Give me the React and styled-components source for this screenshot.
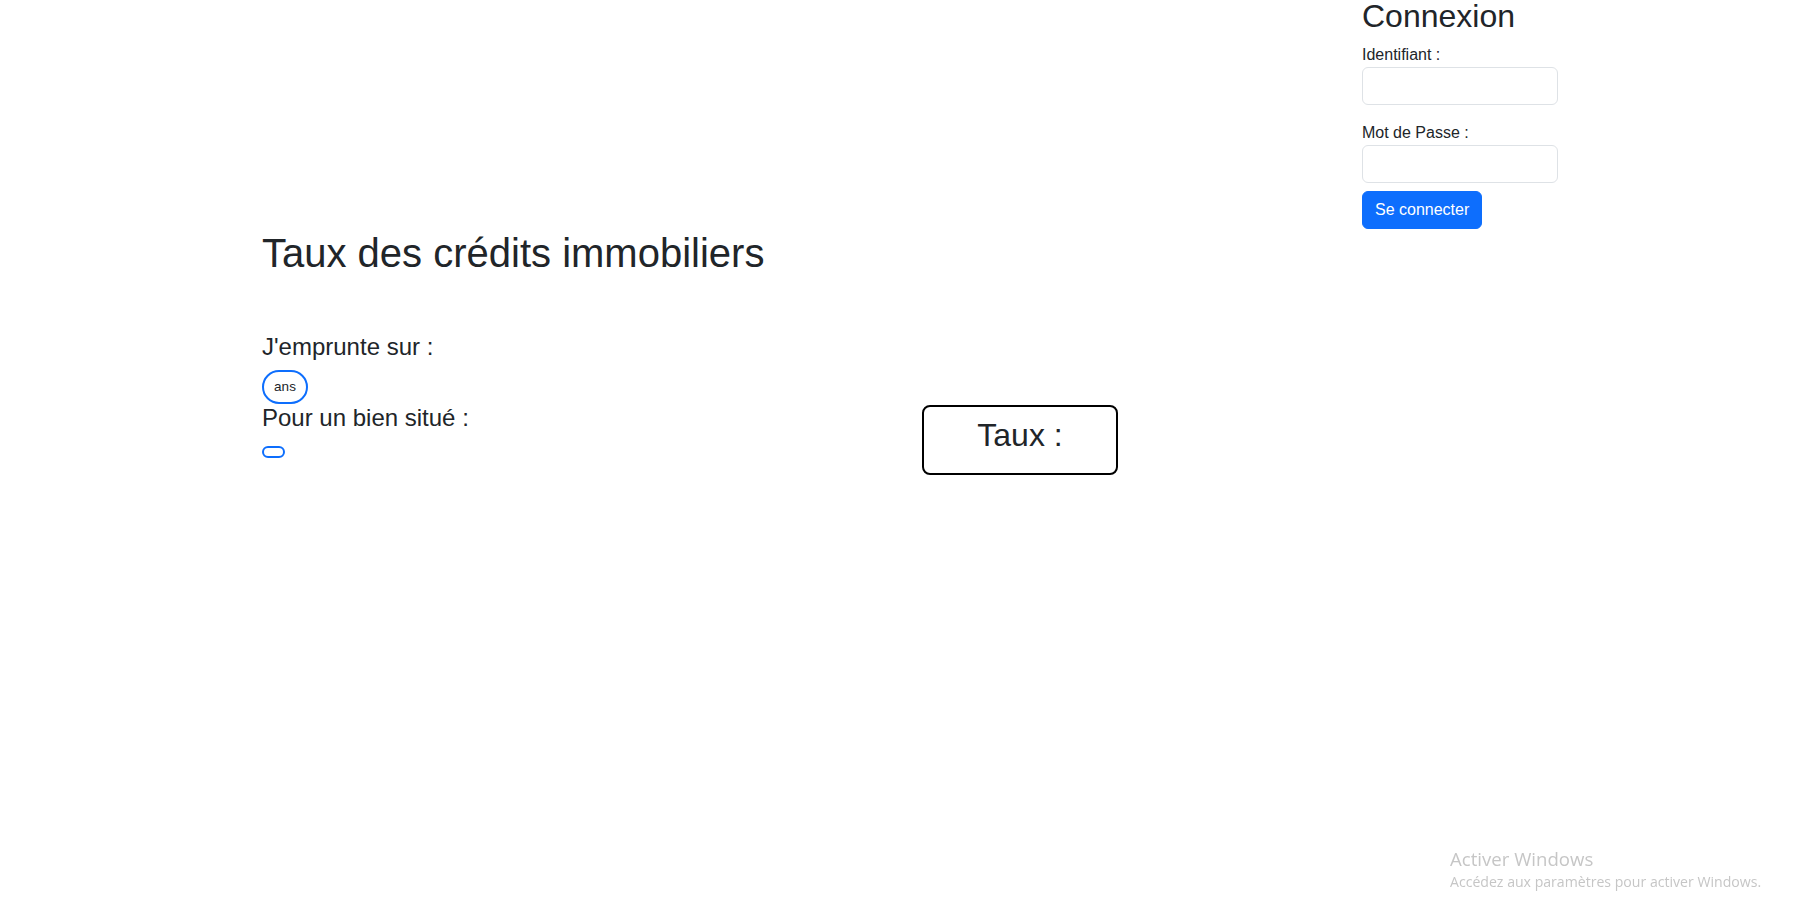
import React from "react";
import styled, { createGlobalStyle } from "styled-components";

const GlobalStyle = createGlobalStyle`
  html, body {
    margin: 0;
    padding: 0;
    background: #ffffff;
  }
  body {
    font-family: "Liberation Sans", Arial, sans-serif;
    color: #212529;
    font-size: 16px;
    line-height: 1.5;
  }
  * { box-sizing: border-box; }
`;

const Page = styled.div`
  width: 1296px;
  margin: 0 auto;
`;

const LoginRow = styled.div`
  display: flex;
  justify-content: flex-end;
  margin-top: -3px;
`;

const LoginForm = styled.form`
  width: 196px;
  display: flex;
  flex-direction: column;
`;

const LoginTitle = styled.h2`
  margin: 0 0 8px;
  font-size: 32px;
  font-weight: 400;
  line-height: 1.2;
`;

const FormLabel = styled.label`
  display: block;
  font-size: 16px;
  line-height: 24px;
`;

const TextInput = styled.input`
  display: block;
  width: 100%;
  height: 38px;
  border: 1px solid #dee2e6;
  border-radius: 6px;
  padding: 6px 12px;
  font-family: inherit;
  font-size: 16px;
  margin-bottom: ${(p) => p.$gap}px;
  outline: none;
`;

const SubmitButton = styled.button`
  align-self: flex-start;
  height: 38px;
  padding: 6px 12px;
  border: 1px solid #0d6efd;
  border-radius: 6px;
  background: #0d6efd;
  color: #ffffff;
  font-family: inherit;
  font-size: 16px;
  line-height: 24px;
  cursor: pointer;
`;

const Title = styled.h1`
  margin: 0 0 56px;
  font-size: 40px;
  font-weight: 400;
  line-height: 1.2;
`;

const Row = styled.div`
  display: flex;
  column-gap: 24px;
  align-items: flex-start;
`;

const FieldColumn = styled.div`
  width: 636px;
  display: flex;
  flex-direction: column;
  align-items: flex-start;
`;

const FieldLabel = styled.div`
  font-size: 24px;
  line-height: 1.2;
`;

const Pill = styled.div`
  display: flex;
  align-items: center;
  justify-content: center;
  width: ${(p) => p.$w}px;
  height: ${(p) => p.$h}px;
  margin-top: ${(p) => p.$mt}px;
  border: 2px solid #0d6efd;
  border-radius: 999px;
  font-size: 13.5px;
  line-height: 1;
  color: #212529;
`;

const RateBox = styled.div`
  width: 196px;
  height: 70px;
  margin-top: 1px;
  border: 2px solid #000000;
  border-radius: 8px;
  padding: 9px 10px;
  text-align: center;
`;

const RateText = styled.h2`
  margin: 0;
  font-size: 32px;
  font-weight: 400;
  line-height: 1.2;
`;

const Watermark = styled.div`
  position: fixed;
  left: 1450px;
  top: 848px;
  font-family: "Open Sans", "Noto Sans", sans-serif;
  color: #c6c6c6;
  pointer-events: none;
`;

const WatermarkTitle = styled.div`
  font-size: 18.6px;
  line-height: 22px;
`;

const WatermarkText = styled.div`
  margin-top: 3px;
  font-size: 14.1px;
  line-height: 18px;
`;

export default function App() {
  return (
    <>
      <GlobalStyle />
      <Page>
        <LoginRow>
          <LoginForm onSubmit={(e) => e.preventDefault()}>
            <LoginTitle>Connexion</LoginTitle>
            <FormLabel htmlFor="ident">Identifiant :</FormLabel>
            <TextInput id="ident" type="text" $gap={16} />
            <FormLabel htmlFor="pass">Mot de Passe :</FormLabel>
            <TextInput id="pass" type="password" $gap={8} />
            <SubmitButton type="submit">Se connecter</SubmitButton>
          </LoginForm>
        </LoginRow>
        <Title>Taux des crédits immobiliers</Title>
        <Row>
          <FieldColumn>
            <FieldLabel>J'emprunte sur :</FieldLabel>
            <Pill $w={46} $h={34} $mt={8}>ans</Pill>
          </FieldColumn>
        </Row>
        <Row>
          <FieldColumn>
            <FieldLabel>Pour un bien situé :</FieldLabel>
            <Pill $w={23} $h={12} $mt={13} />
          </FieldColumn>
          <RateBox>
            <RateText>Taux :</RateText>
          </RateBox>
        </Row>
      </Page>
      <Watermark>
        <WatermarkTitle>Activer Windows</WatermarkTitle>
        <WatermarkText>Accédez aux paramètres pour activer Windows.</WatermarkText>
      </Watermark>
    </>
  );
}
